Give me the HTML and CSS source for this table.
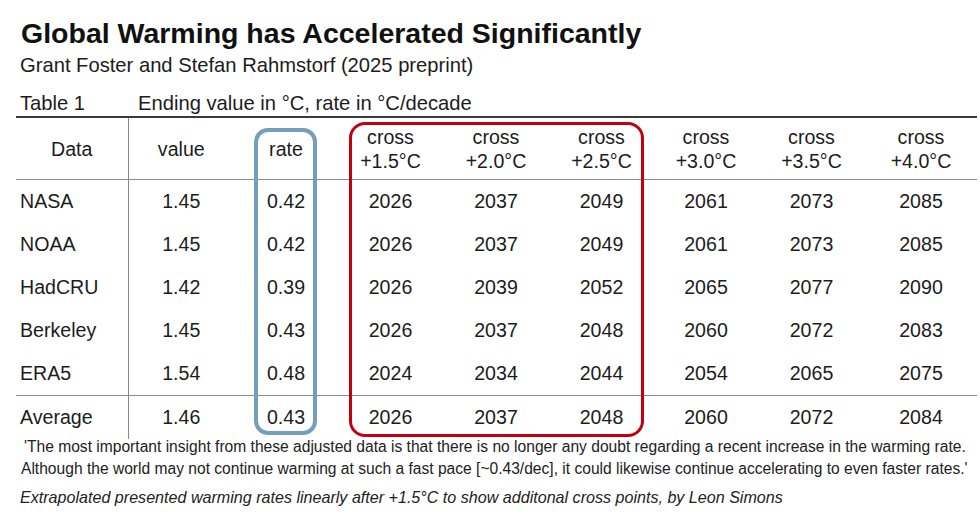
FILE: index.html
```html
<!DOCTYPE html>
<html lang="en">
<head>
<meta charset="utf-8">
<title>Global Warming has Accelerated Significantly</title>
<link rel="stylesheet" href="styles.css">
</head>
<body>
<div class="page">
  <h1 class="title">Global Warming has Accelerated Significantly</h1>
  <p class="subtitle">Grant Foster and Stefan Rahmstorf (2025 preprint)</p>
  <div class="caption"><span class="caption-label">Table 1</span><span>Ending value in °C, rate in °C/decade</span></div>
  <div class="table-wrap">
    <table class="data">
      <colgroup>
        <col class="c-data"><col class="c-value"><col class="c-rate"><col class="c-x1"><col class="c-x2"><col class="c-x3"><col class="c-x4"><col class="c-x5"><col class="c-x6">
      </colgroup>
      <thead>
        <tr>
          <th class="first">Data</th>
          <th>value</th>
          <th>rate</th>
          <th>cross<br>+1.5°C</th>
          <th>cross<br>+2.0°C</th>
          <th>cross<br>+2.5°C</th>
          <th>cross<br>+3.0°C</th>
          <th>cross<br>+3.5°C</th>
          <th>cross<br>+4.0°C</th>
        </tr>
      </thead>
      <tbody>
        <tr><td class="first">NASA</td><td>1.45</td><td>0.42</td><td>2026</td><td>2037</td><td>2049</td><td>2061</td><td>2073</td><td>2085</td></tr>
        <tr><td class="first">NOAA</td><td>1.45</td><td>0.42</td><td>2026</td><td>2037</td><td>2049</td><td>2061</td><td>2073</td><td>2085</td></tr>
        <tr><td class="first">HadCRU</td><td>1.42</td><td>0.39</td><td>2026</td><td>2039</td><td>2052</td><td>2065</td><td>2077</td><td>2090</td></tr>
        <tr><td class="first">Berkeley</td><td>1.45</td><td>0.43</td><td>2026</td><td>2037</td><td>2048</td><td>2060</td><td>2072</td><td>2083</td></tr>
        <tr><td class="first">ERA5</td><td>1.54</td><td>0.48</td><td>2024</td><td>2034</td><td>2044</td><td>2054</td><td>2065</td><td>2075</td></tr>
        <tr class="avg"><td class="first">Average</td><td>1.46</td><td>0.43</td><td>2026</td><td>2037</td><td>2048</td><td>2060</td><td>2072</td><td>2084</td></tr>
      </tbody>
    </table>
    <div class="hl hl-blue"></div>
    <div class="hl hl-red"></div>
  </div>
  <p class="quote">'The most important insight from these adjusted data is that there is no longer any doubt regarding a recent increase in the warming rate.<br>Although the world may not continue warming at such a fast pace [~0.43/dec], it could likewise continue accelerating to even faster rates.'</p>
  <p class="credit">Extrapolated presented warming rates linearly after +1.5°C to show additonal cross points, by Leon Simons</p>
</div>
</body>
</html>
```

FILE: styles.css
```css
html, body {
  margin: 0;
  padding: 0;
  background: #ffffff;
}

body {
  font-family: "Liberation Sans", Arial, sans-serif;
  color: #1c1c1c;
  width: 980px;
  height: 526px;
  overflow: hidden;
}

.page {
  padding: 15px 0 0 0;
}

.title {
  margin: 0 0 0 21px;
  font-size: 28.5px;
  line-height: 36px;
  font-weight: bold;
  color: #111;
}

.subtitle {
  margin: 0 0 0 20px;
  font-size: 20.2px;
  line-height: 28px;
}

.caption {
  display: flex;
  margin: 11px 0 0 20px;
  font-size: 20.2px;
  line-height: 26px;
}

.caption-label {
  width: 118px;
}

.table-wrap {
  position: relative;
  margin-left: 16px;
  width: 961px;
}

.data {
  border-collapse: collapse;
  table-layout: fixed;
  width: 961px;
  font-size: 19.6px;
  border-top: 2px solid #3a3a3a;
}

.c-data { width: 112px; }
.c-value { width: 106px; }
.c-rate { width: 104px; }
.c-x1 { width: 105px; }
.c-x2 { width: 106px; }
.c-x3 { width: 105px; }
.c-x4 { width: 104px; }
.c-x5 { width: 107px; }
.c-x6 { width: 112px; }

.data th {
  font-weight: normal;
  height: 61px;
  padding: 0;
  line-height: 24px;
  text-align: center;
  vertical-align: middle;
  border-bottom: 1.5px solid #8a8a8a;
}

.data td {
  height: 43px;
  padding: 0;
  text-align: center;
  vertical-align: middle;
}

.data td.first {
  text-align: left;
  padding-left: 4px;
}

.data .first {
  border-right: 1.5px solid #8a8a8a;
}

.data tr.avg td {
  border-top: 1.5px solid #8a8a8a;
}

.hl {
  position: absolute;
  box-sizing: border-box;
  pointer-events: none;
}

.hl-blue {
  left: 238px;
  top: 12px;
  width: 63px;
  height: 307px;
  border: 4px solid #749fbc;
  border-radius: 14px;
}

.hl-red {
  left: 333px;
  top: 6px;
  width: 295px;
  height: 315px;
  border: 3.5px solid #c3000e;
  border-radius: 16px;
}

.quote {
  margin: -3px 0 0 21px;
  font-size: 15.6px;
  line-height: 22px;
  color: #222;
  text-indent: 3px;
}

.credit {
  margin: 6px 0 0 20px;
  font-size: 16.1px;
  line-height: 22px;
  font-style: italic;
  color: #222;
}
```
